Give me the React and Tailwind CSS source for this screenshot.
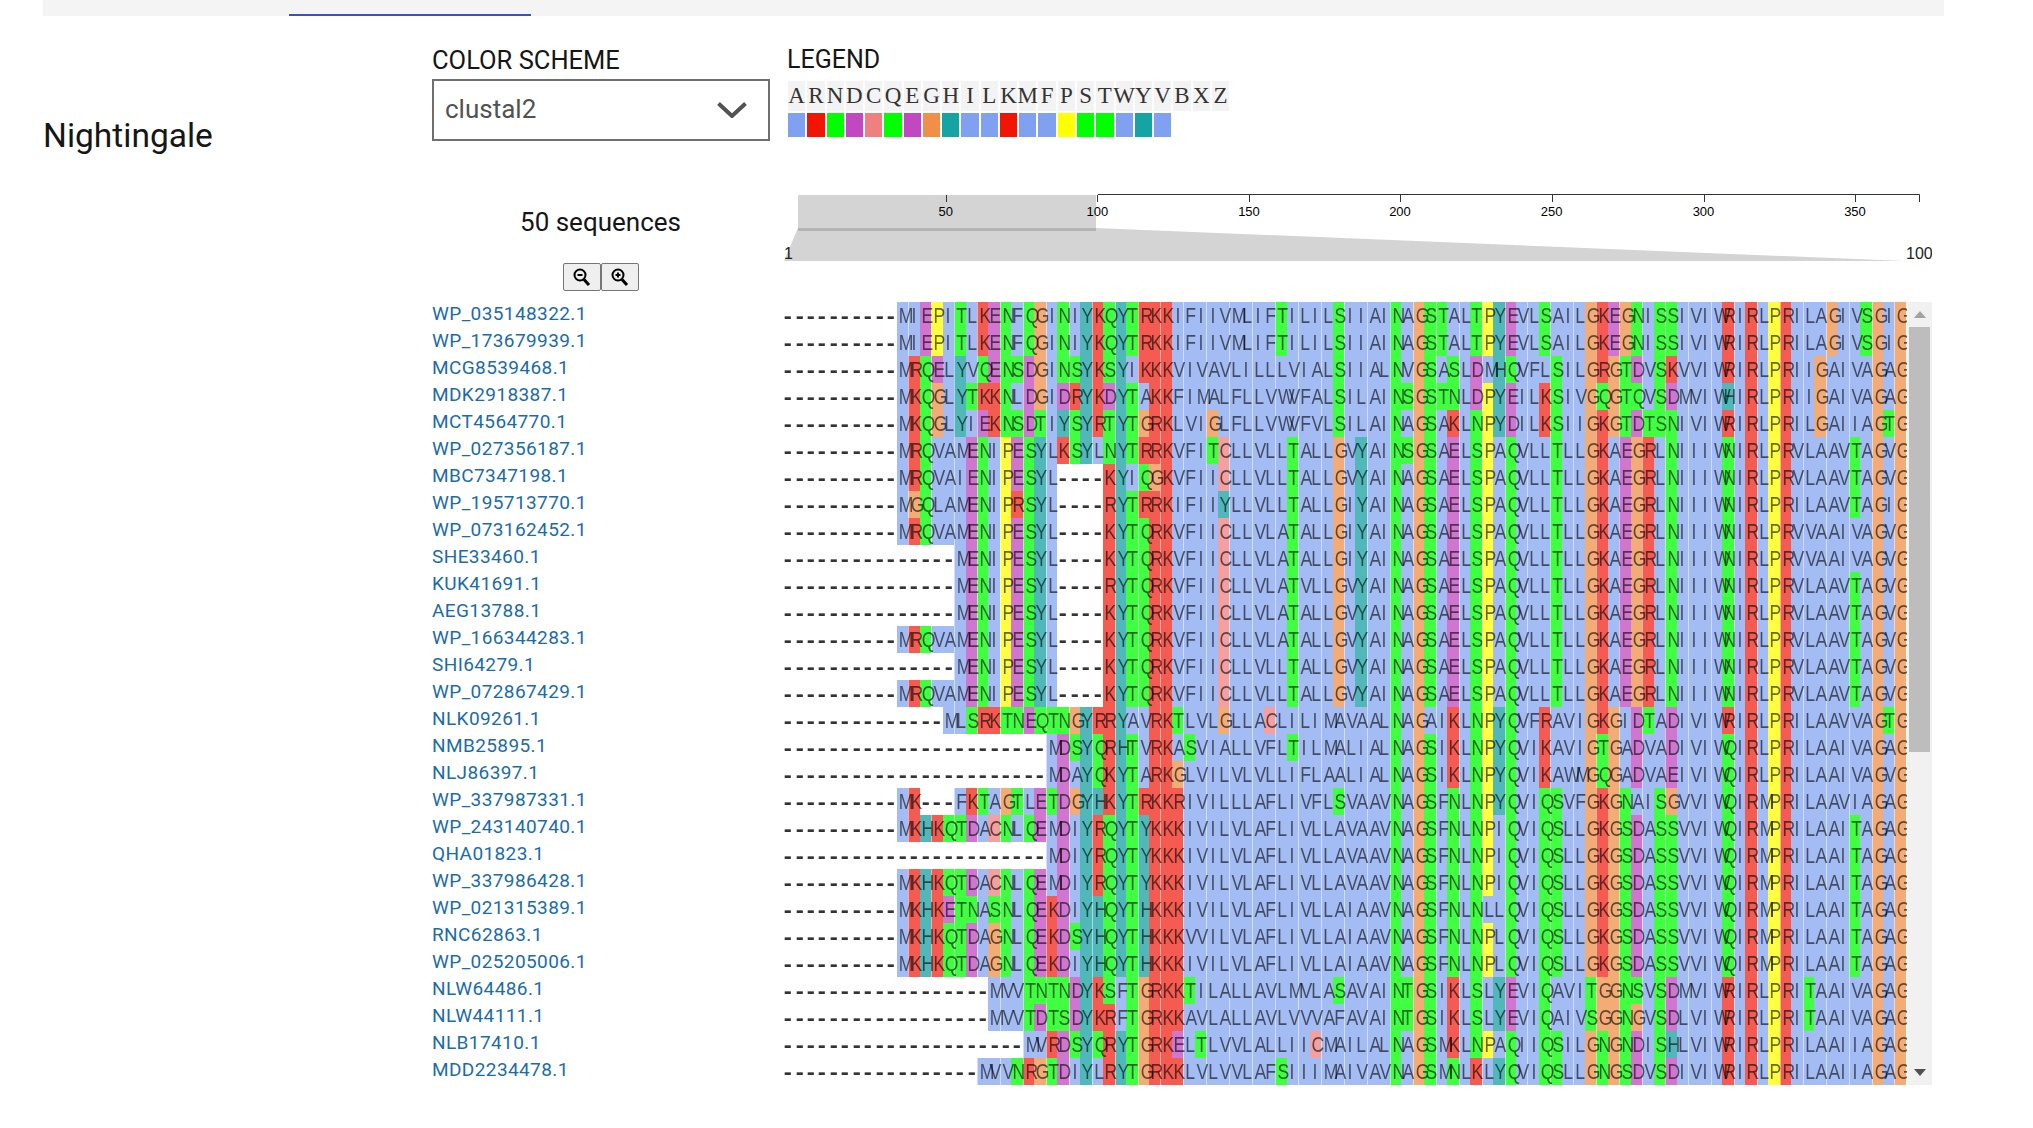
import React from 'react';

const legendLetters = 'ARNDCQEGHILKMFPSTWYVBXZ'.split('');

const swatches = {
  A: 'bg-[#80a0f0]', R: 'bg-[#f01505]', N: 'bg-[#00ff00]', D: 'bg-[#c048c0]', C: 'bg-[#f08080]',
  Q: 'bg-[#00ff00]', E: 'bg-[#c048c0]', G: 'bg-[#f09048]', H: 'bg-[#15a4a4]', I: 'bg-[#80a0f0]',
  L: 'bg-[#80a0f0]', K: 'bg-[#f01505]', M: 'bg-[#80a0f0]', F: 'bg-[#80a0f0]', P: 'bg-[#ffff00]',
  S: 'bg-[#00ff00]', T: 'bg-[#00ff00]', W: 'bg-[#80a0f0]', Y: 'bg-[#15a4a4]', V: 'bg-[#80a0f0]',
};

// same scheme as the legend, but the msa canvas draws them at about 70% opacity
const cellColors = {
  A: 'bg-[#a4bcf4]', R: 'bg-[#f55b50]', N: 'bg-[#40ff40]', D: 'bg-[#d076d0]', C: 'bg-[#f4a0a0]',
  Q: 'bg-[#40ff40]', E: 'bg-[#d076d0]', G: 'bg-[#f4ac76]', H: 'bg-[#50b8b8]', I: 'bg-[#a4bcf4]',
  L: 'bg-[#a4bcf4]', K: 'bg-[#f55b50]', M: 'bg-[#a4bcf4]', F: 'bg-[#a4bcf4]', P: 'bg-[#ffff40]',
  S: 'bg-[#40ff40]', T: 'bg-[#40ff40]', W: 'bg-[#a4bcf4]', Y: 'bg-[#50b8b8]', V: 'bg-[#a4bcf4]',
};

const seg4a = 'GKAEGRLNIIIWNIRLPRVLAAVTAGVG';
const seg3a = 'VYAINAGSAELSPAQVLLTLL';
const seg4b = 'GKGSDASSVVIWQIRMPRILAAITAGAG';

const sequences = [
  ['WP_035148322.1', '----------MIEPITLKENFQGINIYKQYTRKKIFIIVMLIFTILILSIIAINAGSTALTPYEVLSAILGKEGNISSIVIWRIRLPRILAGIVSGIG'],
  ['WP_173679939.1', '----------MIEPITLKENFQGINIYKQYTRKKIFIIVMLIFTILILSIIAINAGSTALTPYEVLSAILGKEGNISSIVIWRIRLPRILAGIVSGIG'],
  ['MCG8539468.1', '----------MRQELYVQENSDGINSYKSYIKKKVIVAVLILLLVIALSIIALNVGSASLDMHQVFLSILGRGTDVSKVVIWRIRLPRIIGAIVAGAG'],
  ['MDK2918387.1', '----------MKQGLYTKKNLDGIDRYKDYTAKKFIMALFLLVWVFALSILAINSGSTNLDPYEILKSIVGQGTQVSDMVIWHIRLPRIIGAIVAGAG'],
  ['MCT4564770.1', '----------MKQGLYIEKNSDTIYSYRTYTGRKLVIGLFLLVWVFVLSILAINAGSAKLNPYDILKSIIGKGTDTSNIVIWRIRLPRILGAIIAGTG'],
  ['WP_027356187.1', '----------MRQVAMENIPESYLKSYLNYTRRKVFITCLLVLLTALLGVYAINSGSAELSPAQVLLTLL' + seg4a],
  ['MBC7347198.1', '----------MRQVAIENIPESYL----KYIQGKVFIICLLVLLTALLG' + 'VYAINAGSAELSPAQVLLTLL' + seg4a],
  ['WP_195713770.1', '----------MGQLAMENIPRSYL----RYTRRKIFIIYLLVLLTALLGIYAINAGSAELSPAQVLLTLLGKAEGRLNIIIWNIRLPRILAAVTAGIG'],
  ['WP_073162452.1', '----------MRQVAMENIPESYL----KYTQRKVFIICLLVLATALLGIYAINAGSAELSPAQVLLTLLGKAEGRLNIIIWNIRLPRVVAAIVAGVG'],
  ['SHE33460.1', '---------------MENIPESYL----KYTQRKVFIICLLVLATALLGIYAINAGSAELSPAQVLLTLLGKAEGRLNIIIWNIRLPRVVAAIVAGVG'],
  ['KUK41691.1', '---------------MENIPESYL----RYTQRKVFIICLLVLATVLLG' + seg3a + seg4a],
  ['AEG13788.1', '---------------MENIPESYL----KYTQRKVFIICLLVLATALLG' + seg3a + seg4a],
  ['WP_166344283.1', '----------MRQVAMENIPESYL----KYTQRKVFIICLLVLATALLG' + seg3a + seg4a],
  ['SHI64279.1', '---------------MENIPESYL----KYTQRKVFIICLLVLLTALLG' + seg3a + seg4a],
  ['WP_072867429.1', '----------MRQVAMENIPESYL----KYTQRKVFIICLLVLLTALLG' + seg3a + seg4a],
  ['NLK09261.1', '--------------MLSRKTNEQTNGYRRYAVRKTLVLGLLACLILIMAVAALNAGAIKLNPYQVFRAVIGKGIDTADIVIWRIRLPRILAAVVAGTG'],
  ['NMB25895.1', '-----------------------MDSYQRHTVRKASVIALLVFLTILMALIALNAGSIKLNPYQVIKAVIGTGADVADIVIWQIRLPRILAAIVAGAG'],
  ['NLJ86397.1', '-----------------------MDAYQKYTARKGLVILVLVLLIFLAALIALNAGSIKLNPYQVIKAWMGQGADVAEIVIWQIRLPRILAAIVAGVG'],
  ['WP_337987331.1', '----------MK---FKTAGTLETDGYHKYTRKKRIVILLLAFLIVFLSVAAVNAGSFNLNPYQVIQSVFGKGNAISGVVIWQIRMPRILAAVIAGAG'],
  ['WP_243140740.1', '----------MKHKQTDACNLQEMDIYRQYTYKKKIVILVLAFLIVLLAVAAVNAGSFNLNPIQVIQSLL' + seg4b],
  ['QHA01823.1', '-----------------------MDIYRQYTYKKKIVILVLAFLIVLLAVAAVNAGSFNLNPIQVIQSLL' + seg4b],
  ['WP_337986428.1', '----------MKHKQTDACNLQEMDIYRQYTYKKKIVILVLAFLIVLLAVAAVNAGSFNLNPIQVIQSLL' + seg4b],
  ['WP_021315389.1', '----------MKHKETNASNLQEKDIYHQYTHKKKIVILVLAFLIVLLAIAAVNAGSFNLNLLQVIQSLL' + seg4b],
  ['RNC62863.1', '----------MKHKQTDAGNLQEKDSYHQYTHKKKVVILVLAFLIVLLAIAAVNAGSFNLNPLQVIQSLL' + seg4b],
  ['WP_025205006.1', '----------MKHKQTDAGNLQEKDIYHQYTHKKKIVILVLAFLIVLLAIAAVNAGSFNLNPLQVIQSLL' + seg4b],
  ['NLW64486.1', '------------------MVVTNTNDYKSFTGRKKTILALLAVLMVLASAVAINTGSIKLSLYEVIQAVITGGNSVSDMVIWRIRLPRITAAIVAGAG'],
  ['NLW44111.1', '------------------MVVTDTSDYKRFTGRKKAVLALLAVLVVVAFAVAINTGSIKLSLYEVIQAIVSGGNGVSDLVIWRIRLPRITAAIVAGAG'],
  ['NLB17410.1', '---------------------MVRDSYQRYTGRKELTLVVLALLIICMAILALNAGSMKLNPAQIIQSILGNGNDISHLVIWRIRLPRILAAIIAGAG'],
  ['MDD2234478.1', '-----------------MVVNRGTDIYLRYTGRKKLVLVVLAFSIIIMAIVAVNAGSMNLKLYQVIQSLLGNGSDVSDIVIWRIRLPRILAAIIAGAG'],
];

const ticks = [
  { label: '50', x: 163.7 },
  { label: '100', x: 315.4 },
  { label: '150', x: 467 },
  { label: '200', x: 618 },
  { label: '250', x: 769.7 },
  { label: '300', x: 921.5 },
  { label: '350', x: 1073 },
];

function MagnifierIcon({ plus }) {
  return (
    <svg width="18" height="18" viewBox="0 0 18 18" fill="none" stroke="#000">
      <circle cx="7" cy="7" r="5.5" strokeWidth="2" />
      <path d="M11 11.5l5 5.5" strokeWidth="3" />
      <path d="M4.5 7h5" strokeWidth="2" />
      {plus && <path d="M7 4.5v5" strokeWidth="2" />}
    </svg>
  );
}

function Navigation() {
  return (
    <svg width="1150" height="80" viewBox="0 0 1150 80" className="block font-['Liberation_Sans',sans-serif]">
      <rect x="16" y="5" width="298" height="36" fill="#d4d4d4" />
      <polygon points="16,38 314,38 1122,71 2,71" fill="#d4d4d4" />
      <rect x="16" y="38" width="298" height="3" fill="#b4b4b4" />
      <path d="M316 4.5H1137.5V12" stroke="#333" fill="none" />
      {ticks.map((t) => (
        <g key={t.label}>
          <path d={`M${Math.round(t.x) + 0.5} 5v7`} stroke="#333" />
          <text x={t.x} y="26" textAnchor="middle" fontSize="13" fill="#000">{t.label}</text>
        </g>
      ))}
      <text x="2" y="69" fontSize="16" fill="#222">1</text>
      <text x="1124" y="69" fontSize="16" fill="#222">100</text>
    </svg>
  );
}

function Residue({ letter, col }) {
  if (letter === '-') {
    return (
      <span className="w-[11.48px] shrink-0 text-center text-[#333] font-bold">
        <span className="inline-block scale-x-[1.1]">-</span>
      </span>
    );
  }
  return (
    <span className={`w-[11.48px] shrink-0 text-center ${cellColors[letter]} ${col % 2 === 1 ? 'border-l border-white/50' : ''}`}>
      <span className="inline-block scale-x-[0.8] text-black/60">{letter}</span>
    </span>
  );
}

export default function App() {
  return (
    <div className="min-h-screen bg-white font-[Roboto,sans-serif] text-[#161616]">
      <div className="ml-[43px] w-[1901px] h-4 bg-[#f4f4f4]">
        <div className="ml-[246px] w-[242px] h-4 border-b-2 border-[#3f51b5]"></div>
      </div>

      <div className="flex pl-[43px]">
        <div className="w-[389px] pt-[100px]">
          <h1 className="text-[33.5px] leading-[40px]">Nightingale</h1>
        </div>

        <div className="w-[350px]">
          <div className="pt-[29px] text-[25.5px] leading-[30px]">COLOR SCHEME</div>
          <div className="mt-[4px] w-[338px] h-[62px] border-2 border-[#6f6f6f] flex items-center justify-between pl-[11px] pr-[21px] text-[26px] text-[#525252]">
            <span className="-mt-[2px]">clustal2</span>
            <svg width="30" height="16" viewBox="0 0 30 16" fill="none" stroke="#525252" strokeWidth="4">
              <path d="M1.5 1.5L15 14L28.5 1.5" />
            </svg>
          </div>
          <div className="w-[337px] mt-[66px] text-center text-[26px] leading-[30px]">50 sequences</div>
          <div className="w-[337px] mt-[26px] flex justify-center">
            <button className="w-[38px] h-[28px] flex items-center justify-center bg-[#efefef] border border-[#767676] rounded-[2px]">
              <MagnifierIcon />
            </button>
            <button className="w-[38px] h-[28px] flex items-center justify-center bg-[#efefef] border border-[#767676] rounded-[2px]">
              <MagnifierIcon plus />
            </button>
          </div>
          <div className="mt-[9px]">
            {sequences.map(([name]) => (
              <div key={name} className="h-[27px] text-[19px] tracking-[0.4px] leading-[27px] text-[#1b6ca8]">{name}</div>
            ))}
          </div>
        </div>

        <div>
          <div className="pl-[5px] pt-[29px] text-[25px] leading-[30px]">LEGEND</div>
          <div className="ml-[6px] mt-[6px] flex gap-[2px]">
            {legendLetters.map((l) => (
              <div key={l} className="w-[17.28px] h-[30px] bg-[#f3f3f3] flex items-center justify-center font-['Liberation_Serif',serif] text-[23px] text-[#333]">{l}</div>
            ))}
          </div>
          <div className="ml-[6px] mt-[2px] flex gap-[2px]">
            {legendLetters.filter((l) => swatches[l]).map((l) => (
              <div key={l} className={`w-[17.28px] h-[24px] ${swatches[l]}`}></div>
            ))}
          </div>
          <div className="mt-[53px]">
            <Navigation />
          </div>
          <div className="mt-[32px] flex">
            <div className="w-[1125px] blur-[0.6px] font-['Liberation_Sans',sans-serif] text-[22px] leading-[27px] overflow-hidden">
              {sequences.map(([name, seq]) => (
                <div key={name} className="flex h-[27px]">
                  {seq.split('').map((letter, i) => (
                    <Residue key={i} letter={letter} col={i} />
                  ))}
                </div>
              ))}
            </div>
            <div className="w-[25px] bg-[#f1f1f1] flex flex-col items-center">
              <div className="h-[25px] flex items-center justify-center">
                <svg width="12" height="7" viewBox="0 0 12 7"><path d="M6 0L12 7H0z" fill="#a3a3a3" /></svg>
              </div>
              <div className="w-[21px] h-[425px] bg-[#bdbdbd]"></div>
              <div className="mt-auto h-[25px] flex items-center justify-center">
                <svg width="12" height="7" viewBox="0 0 12 7"><path d="M0 0H12L6 7z" fill="#505050" /></svg>
              </div>
            </div>
          </div>
        </div>
      </div>
    </div>
  );
}
